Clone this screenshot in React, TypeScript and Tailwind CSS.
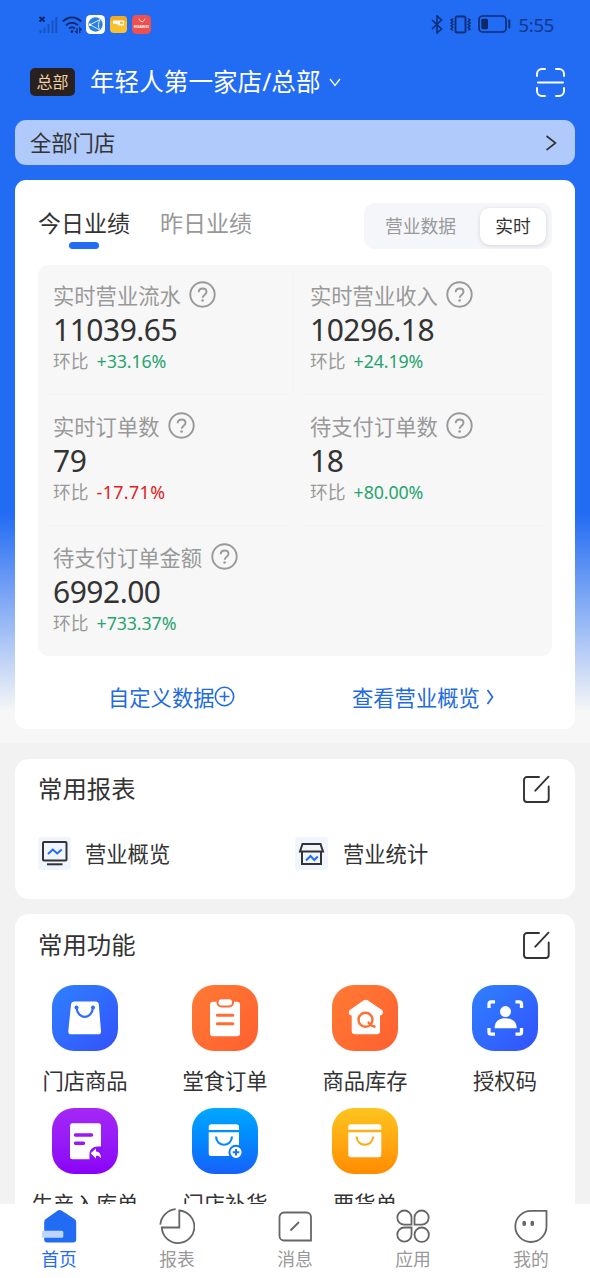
import type {ReactNode} from "react";

interface Metric {
    label: string;
    value: string;
    change: string;
}

const metrics: Metric[] = [
    {label: "实时营业流水", value: "11039.65", change: "+33.16%"},
    {label: "实时营业收入", value: "10296.18", change: "+24.19%"},
    {label: "实时订单数", value: "79", change: "-17.71%"},
    {label: "待支付订单数", value: "18", change: "+80.00%"},
    {label: "待支付订单金额", value: "6992.00", change: "+733.37%"},
];

function StatusBar() {
    return (
        <div className="flex h-12 items-center justify-between pl-[38px] pr-9 text-[#12378c]">
            <div className="flex items-center pt-px">
                <svg width="20" height="20" viewBox="0 0 20 20" fill="none" stroke="currentColor">
                    <path d="M1.500 2l5 4.500M6.500 2l-5 4.500" stroke="#0b2560" strokeWidth="1.800"/>
                    <path d="M2.500 15v3M6.500 12.500v5.500M10.500 9v9M14.500 5.500v12.500M18.300 2v16" strokeWidth="2" opacity=".5"/>
                </svg>
                <svg className="ml-1" width="20" height="20" viewBox="0 0 20 20" fill="none" stroke="#0f2d73" strokeWidth="2">
                    <path d="M.8 6.500C6 1 14 1 19.200 6.500M4 10.200c3.500-3.400 8.500-3.400 12 0M7.200 13.500c1.700-1.500 3.900-1.500 5.600 0"/>
                    <circle cx="10" cy="16.500" r="1" fill="#0f2d73" strokeWidth="1"/>
                    <path d="M15 13v5l-2-2M17.800 18v-5l2 2" strokeWidth="1.300"/>
                </svg>
                <svg className="ml-1" width="19" height="19" viewBox="0 0 19 19">
                    <rect width="19" height="19" rx="4.500" fill="#fff"/>
                    <circle cx="9.500" cy="9.500" r="7.200" fill="#2b80dd"/>
                    <path d="M4 9.800L14 4.500M4 9.800l9.500 5M14 4.500c-2 3.500-2 7-.5 10.300" stroke="#d7ebff" strokeWidth="1" fill="none"/>
                    <circle cx="4" cy="9.800" r="1.300" fill="#fff"/>
                </svg>
                <svg className="ml-[5px]" width="17" height="17" viewBox="0 0 17 17">
                    <rect width="17" height="17" rx="4" fill="#fbc02d"/>
                    <path d="M0 4a4 4 0 0 1 4-4h9a4 4 0 0 1 4 4v1H0z" fill="#f3aa25"/>
                    <path d="M3 4.500h11v5H8.500L7 7.800H3z" fill="#fff"/>
                    <rect x="10" y="5.500" width="3" height="2.500" rx="1" fill="#f7b52c"/>
                </svg>
                <div className="relative ml-[5px] flex h-[19px] w-[19px] items-end justify-center rounded-[4.5px] bg-[#ee504f]">
                    <svg className="absolute left-[6px] top-[3px]" width="8" height="5" viewBox="0 0 8 5">
                        <path d="M1 .5c.5 4 5.500 4 6 0" fill="none" stroke="#ffd9d5"/>
                    </svg>
                    <span className="origin-bottom scale-[.42] whitespace-nowrap text-[9px] font-bold leading-[36px] text-white">HUAWEI</span>
                </div>
            </div>
            <div className="flex items-center">
                <svg width="12" height="19" viewBox="0 0 12 19" fill="none" stroke="#0c2d7a" strokeWidth="1.600">
                    <path d="M1 5l9.500 9-4.500 4V1l4.500 4L1 14"/>
                </svg>
                <svg className="ml-[6px]" width="23" height="19" viewBox="0 0 23 19" fill="none" stroke="#0c2d7a">
                    <rect x="6.500" y="1.500" width="10" height="16" rx="1.800" strokeWidth="1.900"/>
                    <path d="M3.800 3.500L2 5l1.800 1.500L2 8l1.800 1.500L2 11l1.800 1.500L2 14l1.800 1.500M19.200 3.500L21 5l-1.800 1.500L21 8l-1.800 1.500L21 11l-1.800 1.500L21 14l-1.800 1.500" strokeWidth="1.500"/>
                </svg>
                <svg className="ml-[6px]" width="33" height="18" viewBox="0 0 33 18" fill="none">
                    <rect x="1" y="1" width="27" height="16" rx="3.500" stroke="#0c2d7a" strokeWidth="1.700"/>
                    <rect x="3.300" y="3.800" width="6.700" height="10.500" rx="1.500" fill="#0c2865"/>
                    <path d="M31.300 5.500v7" stroke="#0c2d7a" strokeWidth="2" strokeLinecap="round"/>
                </svg>
                <span className="ml-[7px] pt-[2px] text-[18.5px] leading-5 tracking-[-0.3px]">5:55</span>
            </div>
        </div>
    );
}

function HelpIcon() {
    return (
        <svg className="-mt-[3px] ml-[8.5px]" width="27" height="27" viewBox="0 0 27 27" fill="none" stroke="#999" strokeWidth="1.900">
            <circle cx="13.500" cy="13.500" r="12.200"/>
            <path d="M9.700 11.200c.1-2.300 1.600-3.700 3.900-3.700s3.900 1.400 3.900 3.400c0 2.600-3.800 3-3.800 5.800"/>
            <circle cx="13.600" cy="19.500" r="1.300" fill="#999" stroke="none"/>
        </svg>
    );
}

function EditIcon() {
    return (
        <svg width="28" height="28" viewBox="0 0 28 28" fill="none" stroke="#333" strokeWidth="1.900" strokeLinecap="round">
            <path d="M17 2H5a3 3 0 0 0-3 3v19a3 3 0 0 0 3 3h18.700a3 3 0 0 0 3-3V11.500M13.300 15.700L26.500 1.700"/>
        </svg>
    );
}

function MetricCell({label, value, change}: Metric) {
    return (
        <div className="h-[131px] pl-[15px] pt-[18px]">
            <div className="flex h-[26px] items-center text-[21.3px] leading-[26px] text-[#999]">
                {label}
                <HelpIcon/>
            </div>
            <div className="mt-[4px] text-[30px] leading-[34px] tracking-[-0.5px] text-[#333]">{value}</div>
            <div className="mt-[4px] flex gap-[8px] text-[17.8px] leading-[20px]">
                <span className="text-[#999]">环比</span>
                <span className={change.startsWith("-") ? "tracking-[0.4px] text-[#e02020]" : "tracking-[-0.1px] text-[#26a56f]"}>
                    {change}
                </span>
            </div>
        </div>
    );
}

function Performance() {
    return (
        <section className="mx-[15px] mt-[15px] h-[549px] rounded-[11px] bg-white px-[23px] pt-[23px]">
            <div className="flex h-[46px] justify-between">
                <div className="flex gap-[30px] text-[23px] leading-[40px]">
                    <div className="flex flex-col items-center text-[#333]">
                        今日业绩
                        <span className="-mt-[1px] h-[7px] w-[30px] rounded-full bg-[#226bf3]"/>
                    </div>
                    <div className="text-[#999]">昨日业绩</div>
                </div>
                <div className="flex w-[188px] items-center justify-between rounded-[11px] bg-[#f5f6fa] pl-[21px] pr-[6px] text-[17.8px]">
                    <span className="text-[#999]">营业数据</span>
                    <span className="flex h-[37px] w-[66px] items-center justify-center rounded-[10px] bg-white text-[#333] shadow-[0_1px_4px_rgba(0,0,0,0.14)]">
                        实时
                    </span>
                </div>
            </div>
            <div className="relative mt-4 grid h-[391px] grid-cols-2 rounded-[11px] bg-[#f7f7f7]">
                {metrics.map((metric) => (
                    <MetricCell key={metric.label} {...metric}/>
                ))}
                <span className="absolute left-[255px] top-2 h-[118px] w-px bg-[#f1f3f5]"/>
                <span className="absolute left-[10px] top-[129px] h-px w-[240px] bg-[#f1f3f5]"/>
                <span className="absolute left-[265px] top-[129px] h-px w-[241px] bg-[#f1f3f5]"/>
                <span className="absolute left-[10px] top-[260px] h-px w-[240px] bg-[#f1f3f5]"/>
                <span className="absolute left-[265px] top-[260px] h-px w-[241px] bg-[#f1f3f5]"/>
            </div>
            <div className="flex pt-[27px] text-[21.3px] leading-[30px] text-[#226bdf]">
                <div className="flex w-[314px] items-center pl-[70px]">
                    自定义数据
                    <svg className="-ml-px -mt-[3px]" width="21" height="21" viewBox="0 0 21 21" fill="none" stroke="#226bdf" strokeWidth="1.600">
                        <circle cx="10.500" cy="10.500" r="9.200"/>
                        <path d="M10.500 5.500v10M5.500 10.500h10"/>
                    </svg>
                </div>
                <div className="flex items-center">
                    查看营业概览
                    <svg className="-mt-[3px] ml-[6px]" width="8" height="16" viewBox="0 0 8 16" fill="none" stroke="#226bdf" strokeWidth="1.700">
                        <path d="M1.500 1l5 7-5 7"/>
                    </svg>
                </div>
            </div>
        </section>
    );
}

function Reports() {
    return (
        <section className="mx-[15px] h-[140px] rounded-[14px] bg-white pl-[23px] pr-[25px]">
            <div className="flex items-center justify-between pt-4 text-[24.4px] leading-[28px] text-[#333]">
                常用报表
                <EditIcon/>
            </div>
            <div className="mt-[34px] grid grid-cols-[257px_1fr] text-[21.3px] leading-[33px] text-[#333]">
                <div className="flex items-center gap-[14px]">
                    <svg width="33" height="33" viewBox="0 0 33 33" fill="none" stroke="#333" strokeWidth="2">
                        <rect width="33" height="33" rx="3" fill="#f0f5fe" stroke="none"/>
                        <rect x="5" y="5" width="23.500" height="18.500" rx="1"/>
                        <path d="M9 27.300h15.500"/>
                        <path d="M10 17l4.800-4.500 4.400 4 4.500-4" stroke="#226bf3"/>
                    </svg>
                    营业概览
                </div>
                <div className="flex items-center gap-[15px]">
                    <svg width="33" height="33" viewBox="0 0 33 33" fill="none" stroke="#333" strokeWidth="2">
                        <rect width="33" height="33" rx="3" fill="#f0f5fe" stroke="none"/>
                        <path d="M7.500 7h18l2.500 7.500H5zM7 14.500V27h19V14.500"/>
                        <path d="M11 23.500l4.500-4.500 3.800 4 3.500-3.500" stroke="#226bf3"/>
                    </svg>
                    营业统计
                </div>
            </div>
        </section>
    );
}

interface Feature {
    label: string;
    tone: string;
    icon: ReactNode;
}

const features: Feature[] = [
    {
        label: "门店商品",
        tone: "bg-linear-to-br from-[#2f80ff] to-[#3350fb]",
        icon: (
            <>
                <path d="M23 16.500h20.500q3 0 3.300 3L49 46q.2 3.300-3 3.300H19.300q-3.200 0-3-3.300l2.700-26.500q.3-3 4-3z" fill="#fff"/>
                <path d="M24.500 22.500C25.500 35 40 35 41 22.500" fill="none" stroke="#2f6bfb" strokeWidth="2.200"/>
                <circle cx="24.500" cy="22.500" r="2" fill="#2f6bfb"/>
                <circle cx="41" cy="22.500" r="2" fill="#2f6bfb"/>
            </>
        ),
    },
    {
        label: "堂食订单",
        tone: "bg-linear-to-br from-[#ff7a33] to-[#ff5f30]",
        icon: (
            <>
                <rect x="18" y="16.700" width="30" height="34.500" rx="3" fill="#fff"/>
                <rect x="25.500" y="13.200" width="15.500" height="8.300" rx="4" fill="#fff" stroke="#ff6e32" strokeWidth="2"/>
                <path d="M25.300 30.300h15.500M25.300 38.800h15.500" stroke="#ff6e32" strokeWidth="3" strokeLinecap="round"/>
            </>
        ),
    },
    {
        label: "商品库存",
        tone: "bg-linear-to-br from-[#ff7a33] to-[#ff5f30]",
        icon: (
            <>
                <path d="M31.700 15.300q2-1.300 4 0L50 25q1.500 1.200.8 3.500-.6 2-2.800 2V46q0 3.300-3.300 3.300H23q-3.300 0-3.300-3.300V30.500q-2.300 0-2.800-2-.5-2.300 1-3.500z" fill="#fff"/>
                <circle cx="33.500" cy="34.800" r="7" fill="none" stroke="#ff6e32" strokeWidth="2.400"/>
                <path d="M36.500 37.500l3 3 3 1.200" fill="none" stroke="#ff6e32" strokeWidth="2.400" strokeLinecap="round"/>
            </>
        ),
    },
    {
        label: "授权码",
        tone: "bg-linear-to-br from-[#2f80ff] to-[#3350fb]",
        icon: (
            <>
                <path d="M17 23v-4q0-2.200 2.200-2.200H23M43.500 16.800h3.800q2.200 0 2.200 2.200v4M49.500 43v4q0 2.200-2.200 2.200h-3.800M23 49.200h-3.800Q17 49.200 17 47v-4" fill="none" stroke="#fff" strokeWidth="3.300"/>
                <circle cx="33.500" cy="26.600" r="5.500" fill="#fff"/>
                <path d="M22.600 43.300c0-7.500 5-10 10.900-10s11.200 2.500 11.200 10z" fill="#fff"/>
            </>
        ),
    },
    {
        label: "生产入库单",
        tone: "bg-linear-to-b from-[#a427f5] to-[#8a00f7]",
        icon: (
            <>
                <rect x="18" y="15.200" width="31" height="36" rx="2.500" fill="#fff"/>
                <path d="M23.500 27h16M23.500 35.300h8" stroke="#9918f5" strokeWidth="3.500" strokeLinecap="round"/>
                <path d="M37.500 52v-7q1-6 8-6.500h5V52z" fill="#9010f6"/>
                <path d="M38.700 45.300l5.300-4.800v3c3.500.3 5 2.700 5 6.800-1.500-2.200-2.800-2.700-5-2.600v2.800z" fill="#fff"/>
            </>
        ),
    },
    {
        label: "门店补货",
        tone: "bg-linear-to-b from-[#03a8ff] to-[#1760fa]",
        icon: (
            <>
                <path d="M16.700 22v-3q0-2.700 2.700-2.700h25q2.600 0 2.600 2.700v3zM16.700 24.300H47V48H19.200q-2.500 0-2.500-2.500z" fill="#fff"/>
                <path d="M24 28.500c.5 11 15.500 11 16 0" fill="none" stroke="#0b88fd" strokeWidth="2.200"/>
                <circle cx="44" cy="44.300" r="6.600" fill="#fff" stroke="#1176fc" strokeWidth="2"/>
                <path d="M44 41v6.600M40.700 44.300h6.600" stroke="#1176fc" strokeWidth="2"/>
            </>
        ),
    },
    {
        label: "要货单",
        tone: "bg-linear-to-b from-[#fdc41e] to-[#ff8c00]",
        icon: (
            <>
                <path d="M16.300 21.800v-3q0-2.500 2.500-2.500h28q2.500 0 2.500 2.500v3zM16.300 24.300h33v22.200q0 2.800-2.800 2.800H19q-2.700 0-2.700-2.800z" fill="#fff"/>
                <path d="M24.500 28.500c.7 11 16 11 16.700 0" fill="none" stroke="#fca913" strokeWidth="2"/>
            </>
        ),
    },
];

// The last row of labels runs on under the tab bar
function Features() {
    return (
        <section className="mx-[15px] mt-[15px] h-[400px] rounded-[14px] bg-white">
            <div className="flex items-center justify-between pl-[23px] pr-[25px] pt-[17px] text-[24.4px] leading-[28px] text-[#333]">
                常用功能
                <EditIcon/>
            </div>
            <div className="mt-[26px] grid grid-cols-4">
                {features.map((feature) => (
                    <div key={feature.label} className="flex h-[123px] flex-col items-center">
                        <div className={`h-[66px] w-[66px] overflow-hidden rounded-[22px] ${feature.tone}`}>
                            <svg width="66" height="66" viewBox="0 0 66 66">{feature.icon}</svg>
                        </div>
                        <span className="mt-[15px] whitespace-nowrap text-[21.3px] leading-[30px] text-[#333]">{feature.label}</span>
                    </div>
                ))}
            </div>
        </section>
    );
}

const tabs = [
    {
        label: "首页",
        icon: (
            <>
                <path d="M16.500 2.700q2.200-1.400 4.400 0L33.500 11q1.700 1.200 1.700 3v17.500q0 3-3 3h-26q-3 0-3-3V14q0-1.800 1.600-3z" fill="#226bf3" stroke="none"/>
                <rect x="1" y="22.700" width="21.300" height="7" rx="1.500" fill="#bdd5fd" stroke="none"/>
            </>
        ),
    },
    {
        label: "报表",
        icon: <path d="M20.300 2.500A16.300 16.300 0 1 1 2.800 19.500H20.300zM16.700 1.200A17 17 0 0 0 1.300 16.700"/>,
    },
    {
        label: "消息",
        icon: <path d="M7 4.500h22.500a4.500 4.500 0 0 1 4.500 4.500v23.500H7A4.500 4.500 0 0 1 2.500 28V9A4.500 4.500 0 0 1 7 4.500zM13.500 22.500l8.500-8.500"/>,
    },
    {
        label: "应用",
        icon: (
            <>
                <path d="M16.500 16.700H9.300a7.100 7.100 0 1 1 7.200-7.200zM19.500 16.700V9.500a7.100 7.100 0 1 1 7.200 7.200zM16.500 19.500v7.200a7.100 7.100 0 1 1-7.200-7.200z"/>
                <circle cx="26.700" cy="26.700" r="7.200"/>
            </>
        ),
    },
    {
        label: "我的",
        icon: (
            <>
                <path d="M18 2.800h15.500V18.300A15.600 15.600 0 1 1 18 2.800z"/>
                <path d="M11.200 14.500v1.800M19.300 14.500v1.800" strokeWidth="3.600" strokeLinecap="round"/>
            </>
        ),
    },
];

function TabBar() {
    return (
        <nav className="grid h-[74px] shrink-0 grid-cols-5 bg-white">
            {tabs.map((tab, index) => (
                <div key={tab.label} className="flex flex-col items-center pt-1">
                    <svg width="36" height="36" viewBox="0 0 36 36" fill="none" stroke="#666" strokeWidth="1.800">{tab.icon}</svg>
                    <span className={index === 0 ? "mt-[4px] text-[17.8px] leading-[22px] text-[#226bf3]" : "mt-[4px] text-[17.8px] leading-[22px] text-[#999]"}>
                        {tab.label}
                    </span>
                </div>
            ))}
        </nav>
    );
}

export default function App() {
    return (
        <div className="flex h-[1278px] w-[590px] flex-col overflow-hidden bg-[#f2f2f2] font-['Noto_Sans','Noto_Sans_CJK_SC',sans-serif]">
            <main className="min-h-0 flex-1 overflow-hidden">
                <div className="mb-4 h-[743px] bg-[linear-gradient(180deg,#226bf3_0px,#226bf3_513px,#f7f7f7_712px)]">
                    <StatusBar/>
                    <header className="flex h-[72px] items-center pb-1 pl-[30px] pr-6 text-white">
                        <span className="flex h-7 w-[45px] items-center justify-center rounded-[5px] bg-[#28211f] text-[16px] text-[#f3d3a6]">总部</span>
                        <span className="ml-[15px] text-[24.6px] leading-[34px]">年轻人第一家店/总部</span>
                        <svg className="ml-2" width="12" height="9" viewBox="0 0 12 9" fill="none" stroke="currentColor" strokeWidth="1.300">
                            <path d="M1 1l5 6.500L11 1"/>
                        </svg>
                        <svg className="ml-auto" width="31" height="31" viewBox="0 0 31 31" fill="none" stroke="currentColor" strokeWidth="2" strokeLinecap="round">
                            <path d="M2 9V7a5 5 0 0 1 5-5h3M21 2h3a5 5 0 0 1 5 5v2M29 21v3a5 5 0 0 1-5 5h-3M10 29H7a5 5 0 0 1-5-5v-3M3 15.500h25"/>
                        </svg>
                    </header>
                    <div className="mx-[15px] flex h-[45px] items-center justify-between rounded-[11px] bg-[#b0cafb] pl-[15px] pr-[18px] text-[21.3px] text-[#333]">
                        全部门店
                        <svg width="12" height="16" viewBox="0 0 12 16" fill="none" stroke="currentColor" strokeWidth="1.600">
                            <path d="M1.500 1l9 7-9 7"/>
                        </svg>
                    </div>
                    <Performance/>
                </div>
                <Reports/>
                <Features/>
            </main>
            <TabBar/>
        </div>
    );
}
